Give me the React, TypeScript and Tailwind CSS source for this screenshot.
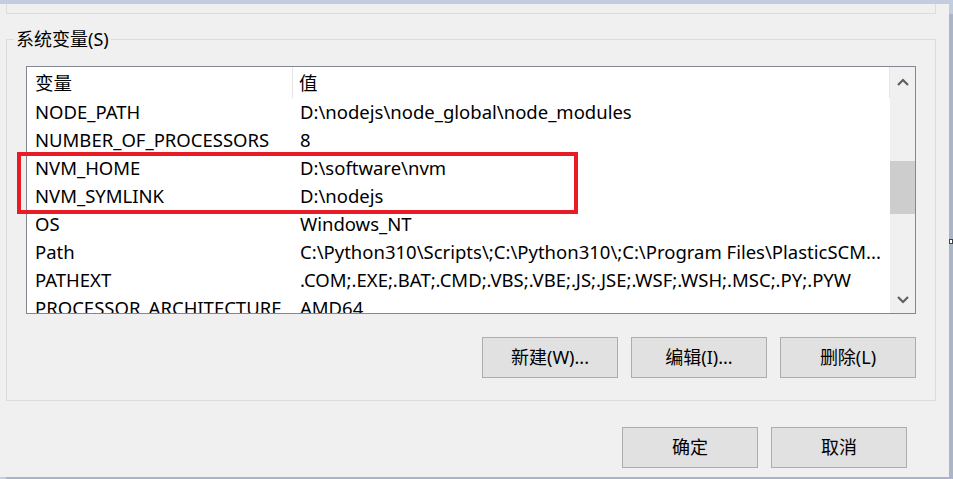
import { ReactNode } from 'react';

const rows: [string, string][] = [
  ['NODE_PATH', 'D:\\nodejs\\node_global\\node_modules'],
  ['NUMBER_OF_PROCESSORS', '8'],
  ['NVM_HOME', 'D:\\software\\nvm'],
  ['NVM_SYMLINK', 'D:\\nodejs'],
  ['OS', 'Windows_NT'],
  ['Path', 'C:\\Python310\\Scripts\\;C:\\Python310\\;C:\\Program Files\\PlasticSCM...'],
  ['PATHEXT', '.COM;.EXE;.BAT;.CMD;.VBS;.VBE;.JS;.JSE;.WSF;.WSH;.MSC;.PY;.PYW'],
  ['PROCESSOR_ARCHITECTURE', 'AMD64'],
];

function Button({ children, className = '' }: { children: ReactNode; className?: string }) {
  return (
    <button
      className={`h-[41px] border border-[#adadad] bg-[#e1e1e1] text-[18px] text-black flex items-center justify-center ${className}`}
    >
      {children}
    </button>
  );
}

function Chevron({ up }: { up?: boolean }) {
  return (
    <svg width="12" height="8" viewBox="0 0 12 8">
      <polyline
        points={up ? '1,7 6,2 11,7' : '1,1 6,6 11,1'}
        fill="none"
        stroke="#606060"
        strokeWidth="2.2"
      />
    </svg>
  );
}

export default function App() {
  return (
    <div
      className="w-[953px] h-[479px] bg-[#f0f0f0] flex overflow-hidden text-black"
      style={{ fontFamily: '"Noto Sans", "Noto Sans CJK SC", sans-serif' }}
    >
      <div className="w-[949px] flex flex-col">
        <div className="h-[4px] bg-[#c4cde0]" />
        <div className="ml-[6px] w-[930px] h-[10px] border-x border-b border-[#dcdcdc]" />

        {/* 系统变量 group */}
        <div className="relative ml-[6px] mt-[25px] w-[930px] h-[362px] border border-[#dcdcdc] pl-[19px] pt-[26px]">
          <span className="absolute left-[7px] -top-[12px] px-[2px] bg-[#f0f0f0] text-[18px] leading-[22px]">
            系统变量(S)
          </span>

          <div className="relative w-[890px] h-[248px] border border-[#828790] bg-white flex">
            <div className="flex-1 overflow-hidden text-[18.5px]">
              <div className="flex h-[31px] items-center border-r border-[#e5e5e5]">
                <div className="w-[266px] pl-[8px] border-r border-[#e5e5e5] h-full flex items-center">变量</div>
                <div className="pl-[6px]">值</div>
              </div>
              {rows.map(([name, value]) => (
                <div key={name} className="flex h-[28px] items-center whitespace-nowrap">
                  <div className="w-[267px] pl-[8px]">{name}</div>
                  <div className="pl-[6px]">{value}</div>
                </div>
              ))}
            </div>
            <div className="w-[25px] bg-[#f0f0f0] flex flex-col items-center">
              <div className="h-[30px] flex items-center justify-center">
                <Chevron up />
              </div>
              <div className="mt-[64px] w-full h-[53px] bg-[#cdcdcd]" />
              <div className="flex-1" />
              <div className="h-[26px] flex items-center justify-center">
                <Chevron />
              </div>
            </div>
          </div>

          <div className="w-[890px] mt-[23px] flex justify-end gap-[13px]">
            <Button className="w-[136px]">新建(W)...</Button>
            <Button className="w-[136px]">编辑(I)...</Button>
            <Button className="w-[136px]">删除(L)</Button>
          </div>
        </div>

        <div className="mt-[26px] mr-[42px] flex justify-end gap-[13px]">
          <Button className="w-[136px]">确定</Button>
          <Button className="w-[136px]">取消</Button>
        </div>

        <div className="flex-1" />
        <div className="h-[2px] flex">
          <div className="w-[6px] bg-[#c4cde0]" />
          <div className="flex-1 bg-[#aab5c9]" />
        </div>
      </div>

      <div className="relative w-[4px] flex flex-col">
        <div className="h-[14px] bg-[#c4cde0]" />
        <div className="flex-1 bg-[#aab5c9]" />
        <div className="absolute left-0 top-[239px] w-[4px] h-[5px] bg-white border border-[#404040]" />
      </div>

      {/* highlight annotation */}
      <div className="absolute left-[17px] top-[152px] w-[561px] h-[62px] border-[4px] border-[#e81c24] pointer-events-none" />
    </div>
  );
}
